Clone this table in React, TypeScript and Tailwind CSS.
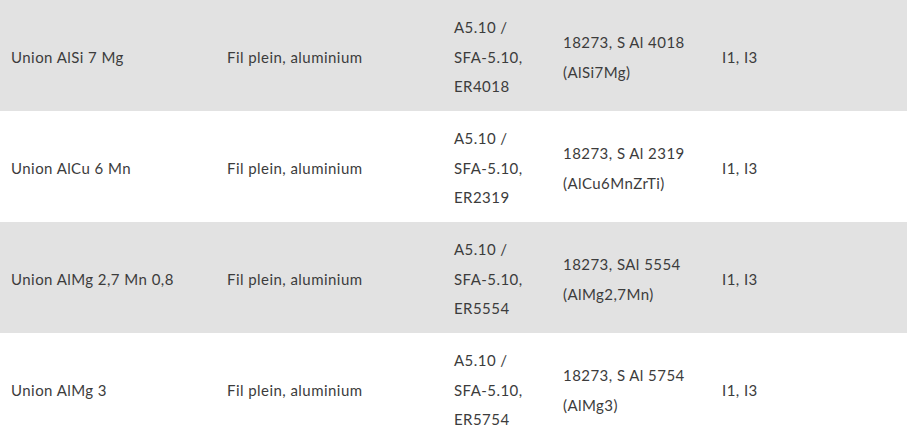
const rows = [
  {
    name: 'Union AlSi 7 Mg',
    type: 'Fil plein, aluminium',
    aws: ['A5.10 /', 'SFA-5.10,', 'ER4018'],
    iso: ['18273, S Al 4018', '(AlSi7Mg)'],
    gas: 'I1, I3',
  },
  {
    name: 'Union AlCu 6 Mn',
    type: 'Fil plein, aluminium',
    aws: ['A5.10 /', 'SFA-5.10,', 'ER2319'],
    iso: ['18273, S Al 2319', '(AlCu6MnZrTi)'],
    gas: 'I1, I3',
  },
  {
    name: 'Union AlMg 2,7 Mn 0,8',
    type: 'Fil plein, aluminium',
    aws: ['A5.10 /', 'SFA-5.10,', 'ER5554'],
    iso: ['18273, SAl 5554', '(AlMg2,7Mn)'],
    gas: 'I1, I3',
  },
  {
    name: 'Union AlMg 3',
    type: 'Fil plein, aluminium',
    aws: ['A5.10 /', 'SFA-5.10,', 'ER5754'],
    iso: ['18273, S Al 5754', '(AlMg3)'],
    gas: 'I1, I3',
  },
];

export default function App() {
  return (
    <div className="w-[907px] h-[443px] overflow-hidden bg-white font-['Lato',sans-serif] text-[15px] leading-[29.5px] tracking-[0.45px] text-[#3c3c3c]">
      <table className="w-full border-collapse table-fixed">
        <colgroup>
          <col className="w-[216px]" />
          <col className="w-[227px]" />
          <col className="w-[109px]" />
          <col className="w-[159px]" />
          <col />
        </colgroup>
        <tbody>
          {rows.map((r, i) => (
            <tr key={r.name} className={i % 2 === 0 ? 'bg-[#e2e2e2] h-[111px]' : 'bg-white h-[111px]'}>
              <td className="pl-[11px] pt-[4px] align-middle">{r.name}</td>
              <td className="pl-[11px] pt-[4px] align-middle">{r.type}</td>
              <td className="pl-[11px] pt-[4px] align-middle">
                {r.aws.map((l) => (
                  <div key={l}>{l}</div>
                ))}
              </td>
              <td className="pl-[11px] pt-[4px] align-middle">
                {r.iso.map((l) => (
                  <div key={l}>{l}</div>
                ))}
              </td>
              <td className="pl-[11px] pt-[4px] align-middle">{r.gas}</td>
            </tr>
          ))}
        </tbody>
      </table>
    </div>
  );
}
